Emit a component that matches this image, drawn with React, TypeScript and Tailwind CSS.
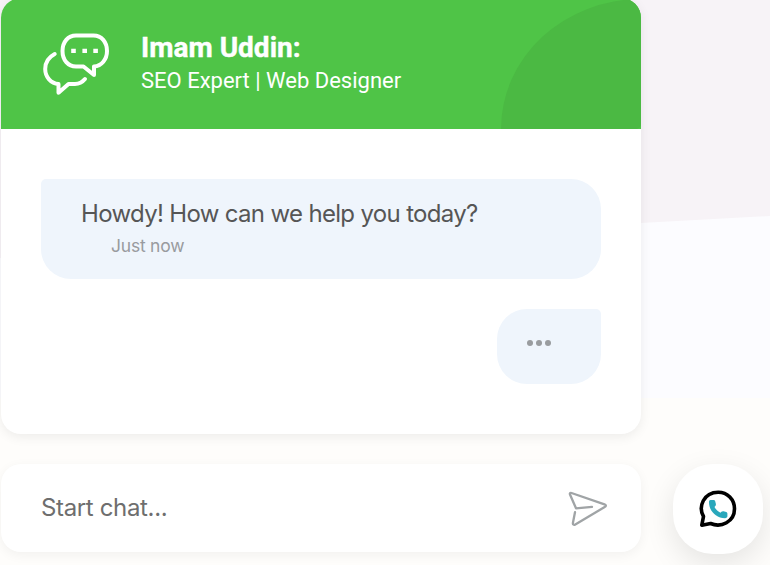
import React from "react";

function ChatIcon() {
  return (
    <svg className="h-[75px] w-[80px] shrink-0" viewBox="0 0 80 75" fill="none" stroke="white" strokeWidth="4" strokeLinecap="round" strokeLinejoin="round">
      <path d="M40 9.5H57.5C65.5 9.5 71 16 71 25C71 33.500 65.500 40 58 40.500V49L47.500 40.500H40C32 40.500 26.500 34 26.500 25C26.500 16 32 9.500 40 9.500Z" />
      <path d="M18.700 28C13 31 9.200 36.500 9.200 43C9.200 51 15 57.500 22.500 58V66.700L32.500 58H39C43.500 58 46.500 56 49 53" />
      <path d="M35.200 22.700h4.600v4.300h-4.600zM46.400 22.700H51V27h-4.600zM57.300 22.700h4.600V27h-4.600z" fill="white" stroke="none" />
    </svg>
  );
}

function SendIcon() {
  return (
    <svg className="-mt-[2px] h-[55px] w-[55px]" viewBox="0 0 55 55" fill="none" stroke="#a0a4a6" strokeWidth="2.300" strokeLinecap="round" strokeLinejoin="round">
      <path d="M32 26.800L16 28.300L10 14.500C9.500 13.300 10.300 12.600 11.500 13L44.500 24.300C46.300 25 46.300 26.200 44.700 27L15.300 44.400C13.800 45.300 12.700 44.500 12.900 43L15 32.200" />
    </svg>
  );
}

function PhoneBubbleIcon() {
  return (
    <svg className="-mt-[3px] mr-[2px] h-[55px] w-[55px]" viewBox="0 0 55 55" fill="none">
      <path d="M11.800 45.200L13.500 36.500C8 27 13.500 12.200 28.200 12.200C37.500 12.200 44.500 19.500 44.500 28.800C44.500 42 31 48 20.600 43.500Z" stroke="black" strokeWidth="3.600" strokeLinejoin="round" />
      <path d="M20.500 20H23.300C24.300 20 25 20.400 25.200 21.300L25.900 24.100C26 25 25.800 25.700 25.100 26.300L24.500 26.900C26 29.500 27.800 31.300 30.500 32.700L31.400 31.800C32 31.200 32.800 31 33.600 31.200L36.200 31.900C37 32.200 37.400 32.700 37.400 33.600V36C37.400 37.400 36.500 38.200 35 38.200C26 38.200 19 31 19 22C19 20.700 19.400 20 20.500 20Z" fill="#2aa8bc" />
    </svg>
  );
}

export default function App() {
  return (
    <main className="relative isolate flex h-[565px] w-[770px] overflow-hidden bg-[#fefdfb] pl-px">
      <div className="absolute inset-x-0 top-0 -z-10 h-[398px] bg-[#fcfcff]">
        <div className="h-[258px] bg-[#f7f3f7] [clip-path:polygon(0_0,100%_0,100%_216px,0_258px)]" />
      </div>

      <div className="flex w-[640px] shrink-0 flex-col gap-[30px]">
        <section className="-mt-[2px] h-[436px] overflow-clip rounded-[20px] bg-white shadow-[0_3px_12px_rgba(0,0,0,0.07)]">
          <header className="relative flex h-[131px] overflow-hidden bg-[#4fc447] pl-[35px] pt-[28px] font-[Roboto,sans-serif] text-white">
            <div className="absolute bottom-0 right-0 h-[130px] w-[140px] rounded-br-[5px] rounded-tl-[140px_130px] bg-[#4bb943]" />
            <ChatIcon />
            <div className="relative ml-[25px] pt-[6px]">
              <h1 className="h-[33px] whitespace-nowrap text-[28px] font-bold leading-[31px] [-webkit-text-stroke:0.4px_white]">Imam Uddin:</h1>
              <p className="whitespace-nowrap text-[22px] leading-[32px]">SEO Expert | Web Designer</p>
            </div>
          </header>

          <div className="flex flex-col items-end gap-[30px] px-[40px] pt-[50px] font-[Inter,sans-serif]">
            <div className="h-[100px] w-full rounded-[30px] rounded-tl-[5px] bg-[#eff5fc] pl-[40px] pt-[17px]">
              <p className="h-[36px] whitespace-nowrap text-[24px] font-normal leading-[36px] tracking-[-0.67px] text-[#565656]">Howdy! How can we help you today?</p>
              <p className="ml-[30px] whitespace-nowrap text-[17.500px] font-normal leading-[27px] tracking-[-0.22px] text-[#999b9f]">Just now</p>
            </div>
            <div className="flex h-[75px] w-[104px] gap-[3px] rounded-[30px] rounded-tr-[5px] bg-[#eff5fc] pl-[30px] pt-[31px]">
              <span className="size-[6px] rounded-full bg-[#999c9f]" />
              <span className="size-[6px] rounded-full bg-[#999c9f]" />
              <span className="size-[6px] rounded-full bg-[#999c9f]" />
            </div>
          </div>
        </section>

        <div className="flex h-[88px] items-center justify-between rounded-[20px] bg-white pl-[40px] pr-[26px] font-[Inter,sans-serif] shadow-[0_3px_12px_rgba(0,0,0,0.05)]">
          <span className="whitespace-nowrap text-[24px] font-normal tracking-[-0.35px] text-[#6e6e6e]">Start chat...</span>
          <SendIcon />
        </div>
      </div>

      <button className="ml-[32px] mt-[464px] flex h-[90px] w-[90px] shrink-0 items-center justify-center rounded-[40px] bg-white shadow-[0_10px_30px_rgba(0,0,0,0.1)]" aria-label="Chat">
        <PhoneBubbleIcon />
      </button>
    </main>
  );
}
